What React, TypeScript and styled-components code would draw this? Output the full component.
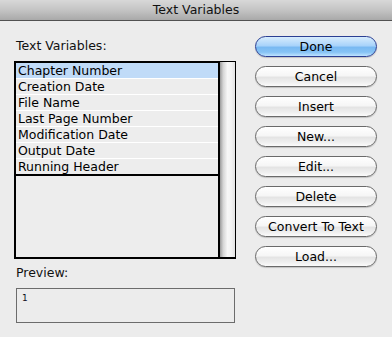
import React from "react";
import styled, { createGlobalStyle } from "styled-components";

const Global = createGlobalStyle`
  html, body { margin: 0; padding: 0; background: #ececec; }
  body { font-family: "DejaVu Sans", "Noto Sans", sans-serif; color: #000; }
`;

const Window = styled.div`
  width: 392px;
  height: 337px;
  background: #ececec;
  display: flex;
  flex-direction: column;
  overflow: hidden;
`;

const TitleBar = styled.div`
  height: 20px;
  border-bottom: 1px solid #515151;
  background: linear-gradient(to bottom, #d8d8d8 0%, #c4c4c4 50%, #a9a9a9 100%);
  display: flex;
  align-items: center;
  justify-content: center;
  font-size: 12.5px;
  color: #111;
  line-height: 20px;
`;

const Body = styled.div`
  display: flex;
  padding-left: 14px;
`;

const LeftCol = styled.div`
  width: 222px;
  display: flex;
  flex-direction: column;
  padding-top: 17px;
`;

const Label = styled.div<{ $mt?: number; $mb: number }>`
  font-size: 12.5px;
  line-height: 16px;
  padding-left: 2px;
  margin-top: ${(p) => p.$mt ?? 0}px;
  margin-bottom: ${(p) => p.$mb}px;
  color: #111;
`;

const ListBox = styled.div`
  height: 198px;
  display: flex;
  box-sizing: border-box;
`;

const Rows = styled.div`
  flex: 1;
  border: 2px solid #000;
  background: #ededed;
  display: flex;
  flex-direction: column;
`;

const RowsTable = styled.div`
  border-bottom: 2px solid #000;
`;

const Row = styled.div<{ $selected?: boolean }>`
  height: 15px;
  line-height: 15px;
  font-size: 12.5px;
  padding-left: 2px;
  border-bottom: 1px solid #fff;
  background: ${(p) => (p.$selected ? "#c0dbf8" : "#ededed")};
  white-space: nowrap;
  &:last-child { border-bottom: none; }
`;

const Scroll = styled.div`
  width: 15px;
  border-top: 1px solid #000;
  border-right: 1px solid #000;
  border-bottom: 2px solid #000;
  background: linear-gradient(to right, #9c9c9c 0%, #d6d6d6 22%, #f7f7f7 50%, #f3f3f3 75%, #e3e3e3 100%);
`;

const PreviewBox = styled.div`
  margin-left: 2px;
  width: 219px;
  height: 35px;
  box-sizing: border-box;
  border: 1px solid #6c6c6c;
  font-size: 9px;
  line-height: 11px;
  padding: 4px 0 0 5px;
  color: #112;
`;

const RightCol = styled.div`
  margin-left: 19px;
  width: 122px;
  padding-top: 15px;
  display: flex;
  flex-direction: column;
  gap: 9px;
`;

const Button = styled.div<{ $primary?: boolean }>`
  height: 21px;
  box-sizing: border-box;
  border-radius: 11px;
  border: 1px solid ${(p) => (p.$primary ? "#2b3f93" : "#6a6a6a")};
  background: ${(p) =>
    p.$primary
      ? "linear-gradient(to bottom, #d7ecfd 0%, #a9d3fa 45%, #79b9f2 55%, #86c3f5 80%, #bfe3ff 100%)"
      : "linear-gradient(to bottom, #ffffff 0%, #f6f6f6 45%, #e4e4e4 55%, #efefef 80%, #fbfbfb 100%)"};
  box-shadow: 0 1px 1px rgba(0, 0, 0, 0.18);
  display: flex;
  align-items: center;
  justify-content: center;
  font-size: 12.5px;
  line-height: 19px;
  white-space: nowrap;
  color: #000;
`;

const items = [
  "Chapter Number",
  "Creation Date",
  "File Name",
  "Last Page Number",
  "Modification Date",
  "Output Date",
  "Running Header",
];

const buttons = ["Done", "Cancel", "Insert", "New...", "Edit...", "Delete", "Convert To Text", "Load..."];

export default function App() {
  return (
    <Window>
      <Global />
      <TitleBar>Text Variables</TitleBar>
      <Body>
        <LeftCol>
          <Label $mb={7}>Text Variables:</Label>
          <ListBox>
            <Rows>
              <RowsTable>
                {items.map((it, i) => (
                  <Row key={it} $selected={i === 0}>
                    {it}
                  </Row>
                ))}
              </RowsTable>
            </Rows>
            <Scroll />
          </ListBox>
          <Label $mt={6} $mb={7}>Preview:</Label>
          <PreviewBox>1</PreviewBox>
        </LeftCol>
        <RightCol>
          {buttons.map((b, i) => (
            <Button key={b} $primary={i === 0}>
              {b}
            </Button>
          ))}
        </RightCol>
      </Body>
    </Window>
  );
}
